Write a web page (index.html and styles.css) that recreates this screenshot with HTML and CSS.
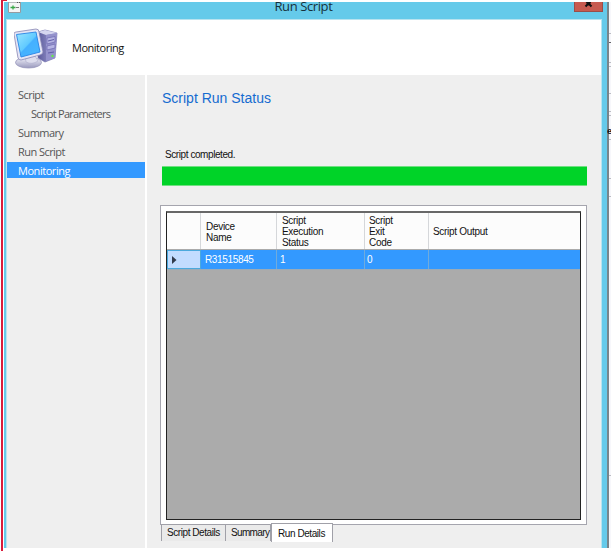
FILE: index.html
```
<!DOCTYPE html>
<html lang="en">
<head>
<meta charset="utf-8">
<title>Run Script</title>
<link rel="stylesheet" href="styles.css">
</head>
<body>
<div class="screen">
  <div class="frame-line"></div>
  <div class="window">
    <header class="titlebar">
      <svg class="app-icon" width="13" height="11" viewBox="0 0 13 11"><path d="M.5 0v10.500h12V0" fill="#f5f5f5" stroke="#969ba0"/><path d="M1 .5h11" stroke="#b8babd"/><path d="M9 0h1M11 0h1" stroke="#555" stroke-width="2"/><path d="M2.500 5.500h5M5 3.500v4" stroke="#39a747" stroke-width="1.300"/><path d="M8 5.500h3" stroke="#777"/></svg>
      <div class="caption"><span>Run Script</span></div>
      <div class="close"><svg width="29" height="10" viewBox="0 0 29 10"><path d="M11.500 4.500L14.500 1.500L17.500 4.500M12.500 0L14.500 2L16.500 0" fill="none" stroke="#111" stroke-width="2"/></svg></div>
    </header>
    <div class="client">
      <div class="banner">
        <svg class="computer" width="44" height="44" viewBox="0 0 44 44">
          <defs>
            <linearGradient id="screen" x1="0" y1="0" x2="1" y2="1"><stop stop-color="#9be6ff"/><stop offset=".48" stop-color="#61caff"/><stop offset=".52" stop-color="#45b0ff"/><stop offset="1" stop-color="#48b8ff"/></linearGradient>
            <linearGradient id="tower" x1="0" y1="0" x2="1" y2="0"><stop stop-color="#5c5b9c"/><stop offset="1" stop-color="#aaa9dc"/></linearGradient>
            <linearGradient id="base" x1="0" y1="0" x2="0" y2="1"><stop stop-color="#f5f5fc"/><stop offset="1" stop-color="#9999bd"/></linearGradient>
          </defs>
          <path d="M24 6L31 4L43 7L41 32L31 36L24 32Z" fill="url(#tower)" stroke="#7775b0" stroke-width=".7"/>
          <path d="M24 6L31 4L43 7L32 9Z" fill="#d5d6ef"/>
          <path d="M32 9L43 7L41 32L32 35Z" fill="#9492cc"/>
          <path d="M33 12L41 10.500V16L33 18ZM33 20L41 18V22L33 24Z" fill="#b6b5e4" stroke="#7370b5" stroke-width=".8"/>
          <path d="M34 15L40 13.500M34 27L40 26" stroke="#605da7"/>
          <circle cx="38.500" cy="30" r="1.200" fill="#65eb48"/>
          <ellipse cx="14.500" cy="36.500" rx="13" ry="5.500" fill="url(#base)" stroke="#9998bd" stroke-width=".8"/>
          <path d="M11 30L20 28L24 35Q18 39 12 36Z" fill="#dddded" stroke="#adaccb" stroke-width=".6"/>
          <path d="M0 8Q0 6 2 6L22 3Q25 3 25 6L29 26Q29 28 26 29L7 34Q5 34 4 32Z" fill="#e5e5f5" stroke="#8886b4" stroke-width=".8"/>
          <path d="M2.500 8.500L22 6L26 26L7 31Z" fill="url(#screen)" stroke="#2984e5" stroke-width=".9"/>
        </svg>
        <span class="banner-title">Monitoring</span>
      </div>
      <div class="body">
        <nav class="steps">
          <div class="step">Script</div>
          <div class="step sub">Script Parameters</div>
          <div class="step">Summary</div>
          <div class="step">Run Script</div>
          <div class="step active">Monitoring</div>
        </nav>
        <main class="main">
          <h1>Script Run Status</h1>
          <p class="status">Script completed.</p>
          <div class="progress"></div>
          <section class="panel">
            <div class="grid">
              <div class="row head">
                <div></div>
                <div>Device<br>Name</div>
                <div>Script<br>Execution<br>Status</div>
                <div>Script<br>Exit<br>Code</div>
                <div>Script Output</div>
              </div>
              <div class="row selected">
                <div class="marker"><svg width="5" height="8" viewBox="0 0 5 8"><path d="M0 0L4.500 4L0 8Z" fill="#323b4c"/></svg></div>
                <div class="device">R31515845</div>
                <div>1</div>
                <div>0</div>
                <div></div>
              </div>
            </div>
          </section>
          <div class="tabs">
            <div class="tab t1">Script Details</div>
            <div class="tab t2">Summary</div>
            <div class="tab t3 current">Run Details</div>
          </div>
        </main>
      </div>
    </div>
  </div>
  <aside class="backdrop"><i></i><i></i><i></i><i></i><i></i><i></i><i></i><b>e</b><i></i><i></i><i></i><i></i></aside>
</div>
</body>
</html>
```
FILE: styles.css
```
* { box-sizing: border-box; }
body { margin: 0; background: #fff; overflow: hidden; font-family: "Liberation Sans", sans-serif; color: #111; }
.screen { display: flex; width: 611px; height: 552px; padding-left: 1px; }
.frame-line { width: 3px; height: 551px; background: linear-gradient(90deg, #d91c3b 2px, #fff 2px); }
.screen::before { content: ""; position: absolute; left: 1px; top: 0; width: 6px; height: 1px; background: #d91c3b; }
.window { width: 603px; height: 546px; margin-top: 2px; background: #65caea; display: flex; flex-direction: column; }
.titlebar { height: 17px; display: flex; justify-content: space-between; overflow: hidden; }
.app-icon { margin-left: 4px; flex: none; }
.caption { font: 13px/14px "Open Sans", sans-serif; width: 58px; white-space: nowrap; margin: -3px 0 0 12px; letter-spacing: -.4px; color: #16313b; }
.close { width: 29px; height: 10px; margin-right: 4px; background: #c75b50; border: solid #9b4d49; border-width: 0 1px 1px; flex: none; }
.close svg { display: block; margin-left: -1px; }
.client { margin: 0 5px 0 2px; border: solid #b9e3ef; border-width: 1px 1px 0; flex: 1; display: flex; flex-direction: column; background: #efefef; min-height: 0; }
.banner { height: 55px; background: #fff; display: flex; align-items: center; padding-left: 7px; }
.computer { margin-top: 1px; }
.banner-title { font: 11px/14px "Open Sans", sans-serif; margin: 1px 0 0 14px; letter-spacing: -.48px; }
.body { display: flex; flex: 1; }
.steps { width: 140px; border-right: 2px solid #fff; padding-top: 10px; }
.step { height: 19px; padding-left: 11px; font: 11px/19px "Open Sans", sans-serif; color: #555; white-space: nowrap; letter-spacing: -.55px; }
.step.sub { padding-left: 24px; letter-spacing: -.72px; }
.step.active { height: 16px; line-height: 17px; margin-top: 1px; background: #3399ff; color: #fff; letter-spacing: -.45px; }
.main { flex: 1; padding: 0 14px 0 15px; display: flex; flex-direction: column; align-items: flex-start; }
h1 { font-weight: 400; font-size: 14px; line-height: 18px; margin: 14px 0 0; color: #156bd0; }
.status { font-size: 10px; line-height: 14px; margin: 41px 0 4px 3px; letter-spacing: -.42px; }
.progress { width: 425px; height: 20px; background: #00d328; border: solid #70df81; border-width: 1px 0; }
.panel { width: 427px; height: 320px; margin: 19px 0 0 -2px; border: 1px solid #a5a5ae; background: #fff; padding: 5px 5px 4px; flex: none; }
.grid { height: 309px; background: #ababab; border: 1px solid #222; border-top: 2px solid #686868; }
.row { display: grid; grid-template-columns: 34px 76px 88px 64px 1fr; }
.row > div { border-right: 1px solid #d5d7da; }
.row > div:last-child { border-right: 0; }
.head { height: 37px; background: #fcfcfc; border-bottom: 1px solid #aaa; font-size: 10px; line-height: 11px; letter-spacing: -.3px; }
.head > div { display: flex; align-items: center; padding: 1px 0 0 5px; }
.head > div:nth-child(n+4) { padding-left: 4px; }
.selected { height: 20px; background: #3399ff; color: #fff; border-bottom: 1px solid #9babb8; font-size: 10px; line-height: 19px; }
.selected > div { border-color: #70abdc; padding-left: 3px; }
.selected > div:nth-child(4) { padding-left: 2px; }
.selected .device { padding-left: 4px; letter-spacing: -.35px; }
.selected .marker { background: #c2dcff; border: 1px solid #4ba9dd; display: flex; align-items: center; padding-left: 4px; }
.tabs { display: flex; height: 18px; font-size: 10px; line-height: 16px; letter-spacing: -.43px; margin-left: -1px; margin-top: -2px; }
.tab { height: 17px; margin-top: 1px; border: solid #a0a0a8; border-width: 1px 1px 0; white-space: nowrap; padding-left: 5px; background: #eaeaea; }
.t1 { width: 65px; }
.t2 { width: 45px; border-left: 0; letter-spacing: -.65px; }
.tab.current { width: 62px; height: 19px; line-height: 19px; margin-top: 0; background: #fff; padding-left: 6px; }
.backdrop { width: 4px; height: 552px; padding-top: 33px; background: linear-gradient(90deg, #78858b 2px, #f7f7fb 2px); clip-path: inset(2px 0 4px 0); }
.backdrop i { display: block; width: 2px; height: 1px; margin: 0 0 8px 2px; background: #bbbcc3; }
.backdrop i:nth-of-type(2) { margin-bottom: 19px; background: #636469; }
.backdrop i:nth-of-type(3) { margin-bottom: 3px; }
.backdrop i:nth-of-type(4) { margin-bottom: 26px; }
.backdrop i:nth-of-type(5) { margin-bottom: 17px; }
.backdrop i:nth-of-type(6) { margin-bottom: 3px; }
.backdrop b { display: block; width: 2px; height: 15px; margin-left: 0; font-size: 9px; line-height: 15px; }
.backdrop i:nth-of-type(8) { margin-bottom: 38px; }
.backdrop i:nth-of-type(9) { margin-bottom: 17px; }
.backdrop i:nth-of-type(10) { margin-bottom: 278px; }
.backdrop i:nth-of-type(11) { margin-bottom: 55px; }
```
